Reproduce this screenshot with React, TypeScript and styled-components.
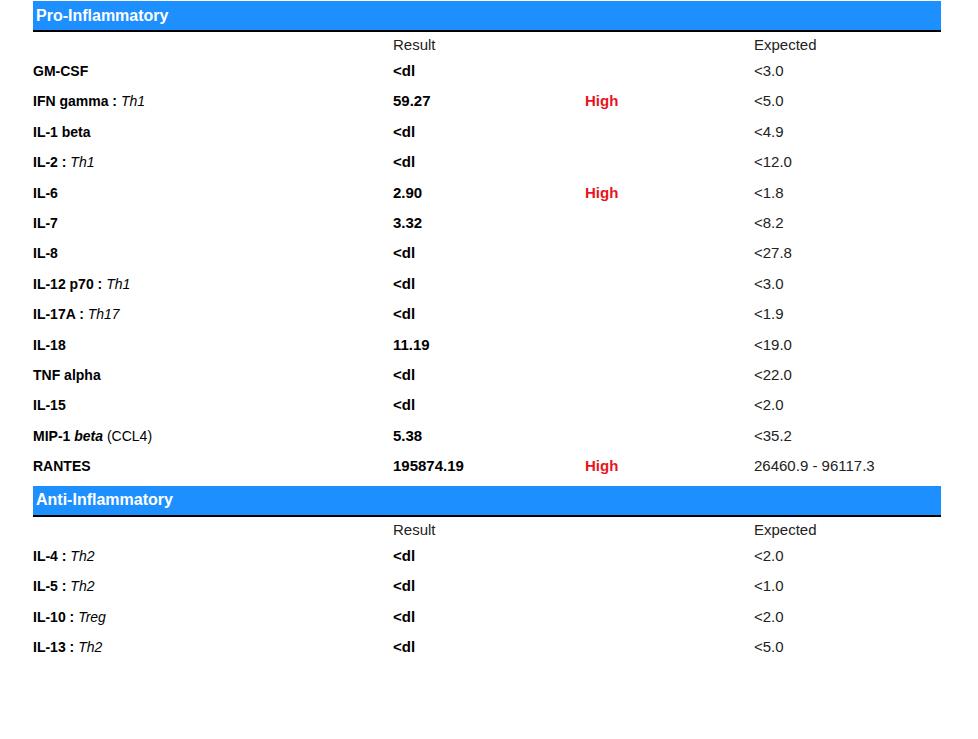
import React from "react";
import styled, { createGlobalStyle } from "styled-components";

const Global = createGlobalStyle`
  body { margin: 0; background: #fff; font-family: "Liberation Sans", Arial, sans-serif; color: #000; }
`;

const Page = styled.div`
  padding: 1px 37px 0 33px;
  display: flex;
  flex-direction: column;
`;

const Bar = styled.div`
  height: 29px;
  background: #1e8fff;
  border-bottom: 2px solid #000;
  color: #fff;
  font-weight: bold;
  font-size: 16px;
  display: flex;
  align-items: center;
  padding-left: 3px;
  box-sizing: content-box;
`;

const Row = styled.div<{ $head?: boolean }>`
  display: grid;
  grid-template-columns: 360px 192px 169px 1fr;
  height: ${(p) => (p.$head ? "26px" : "30.4px")};
  align-items: ${(p) => (p.$head ? "center" : "start")};
  padding-top: ${(p) => (p.$head ? "0" : "4px")};
  box-sizing: border-box;
  line-height: 18px;
`;

const Name = styled.div`
  font-size: 14px;
  font-weight: bold;
  i { font-weight: normal; }
  b i { font-weight: bold; }
  span { font-weight: normal; }
`;

const Val = styled.div`
  font-size: 15px;
  font-weight: bold;
`;

const Flag = styled.div`
  font-size: 15px;
  font-weight: bold;
  color: #e8141b;
`;

const Plain = styled.div`
  font-size: 15px;
  color: #222;
`;

type R = { n: React.ReactNode; v: string; f?: boolean; e: string };

const pro: R[] = [
  { n: "GM-CSF", v: "<dl", e: "<3.0" },
  { n: <>IFN gamma : <i>Th1</i></>, v: "59.27", f: true, e: "<5.0" },
  { n: "IL-1 beta", v: "<dl", e: "<4.9" },
  { n: <>IL-2 : <i>Th1</i></>, v: "<dl", e: "<12.0" },
  { n: "IL-6", v: "2.90", f: true, e: "<1.8" },
  { n: "IL-7", v: "3.32", e: "<8.2" },
  { n: "IL-8", v: "<dl", e: "<27.8" },
  { n: <>IL-12 p70 : <i>Th1</i></>, v: "<dl", e: "<3.0" },
  { n: <>IL-17A : <i>Th17</i></>, v: "<dl", e: "<1.9" },
  { n: "IL-18", v: "11.19", e: "<19.0" },
  { n: "TNF alpha", v: "<dl", e: "<22.0" },
  { n: "IL-15", v: "<dl", e: "<2.0" },
  { n: <>MIP-1 <b><i>beta</i></b> <span>(CCL4)</span></>, v: "5.38", e: "<35.2" },
  { n: "RANTES", v: "195874.19", f: true, e: "26460.9 - 96117.3" },
];

const anti: R[] = [
  { n: <>IL-4 : <i>Th2</i></>, v: "<dl", e: "<2.0" },
  { n: <>IL-5 : <i>Th2</i></>, v: "<dl", e: "<1.0" },
  { n: <>IL-10 : <i>Treg</i></>, v: "<dl", e: "<2.0" },
  { n: <>IL-13 : <i>Th2</i></>, v: "<dl", e: "<5.0" },
];

function Section({ title, rows, gap }: { title: string; rows: R[]; gap?: boolean }) {
  return (
    <div style={gap ? { marginTop: 2.5 } : undefined}>
      <Bar>{title}</Bar>
      <Row $head>
        <div />
        <Plain>Result</Plain>
        <div />
        <Plain>Expected</Plain>
      </Row>
      {rows.map((r, i) => (
        <Row key={i}>
          <Name>{r.n}</Name>
          <Val>{r.v}</Val>
          {r.f ? <Flag>High</Flag> : <div />}
          <Plain>{r.e}</Plain>
        </Row>
      ))}
    </div>
  );
}

export default function App() {
  return (
    <>
      <Global />
      <Page>
        <Section title="Pro-Inflammatory" rows={pro} />
        <Section title="Anti-Inflammatory" rows={anti} gap />
      </Page>
    </>
  );
}
